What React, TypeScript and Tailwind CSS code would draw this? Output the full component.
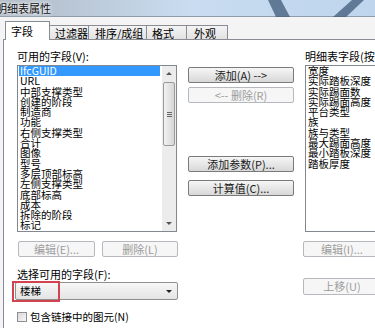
import React from 'react'

const leftItems = [
  'IfcGUID', 'URL', '中部支撑类型', '创建的阶段', '制造商', '功能', '右侧支撑类型', '合计',
  '图像', '型号', '多层顶部标高', '左侧支撑类型', '底部标高', '成本', '拆除的阶段', '标记',
]

const rightItems = [
  '宽度', '实际踏板深度', '实际踢面数', '实际踢面高度', '平台类型', '族', '族与类型',
  '最大踢面高度', '最小踏板深度', '踏板厚度',
]

function Btn({ label, disabled, className = '' }: { label: string; disabled?: boolean; className?: string }) {
  const look = disabled
    ? 'border-[#b5b9bd] bg-[#f6f6f6] text-[#9c9c9c]'
    : 'border-[#7a7a7a] bg-gradient-to-b from-[#f6f6f6] to-[#d8d8d8] text-[#1a1a1a]'
  return (
    <div className={`h-[16px] flex items-center justify-center rounded-[2px] border text-[11px] leading-none whitespace-nowrap ${look} ${className}`}>
      {label}
    </div>
  )
}

function Tab({ label, selected, className = '' }: { label: string; selected?: boolean; className?: string }) {
  if (selected) {
    return (
      <div className={`relative z-10 h-[19px] -mb-px border border-b-0 border-[#898c95] bg-white pl-[5px] pt-[3px] text-[11px] leading-[13px] ${className}`}>
        {label}
      </div>
    )
  }
  return (
    <div className={`h-[14px] -ml-px border border-b-0 border-[#898c95] bg-gradient-to-b from-[#f4f4f4] to-[#e2e2e2] pl-[5px] pt-[1px] text-[11px] leading-[12px] ${className}`}>
      {label}
    </div>
  )
}

export default function App() {
  return (
    <div className="w-[375px] h-[328px] overflow-hidden flex flex-col bg-[#f4f4f4] text-black font-['Noto_Sans_CJK_SC','Noto_Sans',sans-serif]">
      {/* title bar */}
      <div className="relative h-[17px] shrink-0 flex items-center border-b border-[#8e9bab] bg-gradient-to-r from-[#b0bac5] via-[#c9dcf0] to-[#bed5ed]">
        <svg className="absolute inset-0" width="375" height="17" viewBox="0 0 375 17">
          <polygon points="268,0 281,0 290,17 276,17" fill="#3f5a78" opacity="0.75" />
          <polygon points="352,0 364,0 346,17 333,17" fill="#3f5a78" opacity="0.75" />
        </svg>
        <span className="relative -ml-[4px] text-[11px] leading-none text-[#111] [text-shadow:0_0_6px_#fff,0_0_3px_#fff]">明细表属性</span>
      </div>

      <div className="flex-1 flex flex-col pt-[4px]">
        {/* tabs */}
        <div className="flex items-end h-[18px] pl-[5px]">
          <Tab label="字段" selected className="w-[45px]" />
          <Tab label="过滤器" className="w-[40px] pl-[3px]" />
          <Tab label="排序/成组" className="w-[59px] pl-[6px]" />
          <Tab label="格式" className="w-[41px]" />
          <Tab label="外观" className="w-[42px] pl-[7px]" />
        </div>

        {/* panel */}
        <div className="flex-1 ml-[3px] border-t border-l border-[#898c95] bg-white pl-[13px] pt-[8px] flex">
          {/* left column */}
          <div className="w-[161px] shrink-0 flex flex-col">
            <div className="h-[17px] text-[11px] leading-[17px]">可用的字段(V):</div>
            <div className="w-[160px] h-[167px] border border-[#828790] bg-white flex overflow-hidden">
              <div className="flex-1 pt-[0px] pl-[1px] overflow-hidden">
                {leftItems.map((it, i) => (
                  <div
                    key={it}
                    className={`h-[10.3px] text-[10.5px] leading-[10.3px] whitespace-nowrap pl-[1px] ${i === 0 ? 'w-[141px] bg-[#3399ff] text-white' : ''}`}
                  >
                    {it}
                  </div>
                ))}
              </div>
              {/* scrollbar */}
              <div className="w-[14px] shrink-0 bg-[#ececec] flex flex-col items-center">
                <div className="h-[15px] w-full flex items-center justify-center">
                  <div className="w-0 h-0 border-l-[3px] border-r-[3px] border-b-[3px] border-l-transparent border-r-transparent border-b-[#555]" />
                </div>
                <div className="mt-[1px] h-[64px] w-[12px] rounded-[2px] border border-[#9a9a9a] bg-gradient-to-r from-[#f2f2f2] to-[#d6d6d6] flex flex-col items-center justify-center gap-[1px]">
                  <div className="w-[5px] h-px bg-[#666]" />
                  <div className="w-[5px] h-px bg-[#666]" />
                  <div className="w-[5px] h-px bg-[#666]" />
                </div>
                <div className="flex-1" />
                <div className="h-[15px] w-full flex items-center justify-center">
                  <div className="w-0 h-0 border-l-[3px] border-r-[3px] border-t-[3px] border-l-transparent border-r-transparent border-t-[#555]" />
                </div>
              </div>
            </div>
            <div className="mt-[9px] flex gap-[7px] pl-[1px]">
              <Btn label="编辑(E)..." disabled className="w-[77px]" />
              <Btn label="删除(L)" disabled className="w-[76px]" />
            </div>
            <div className="mt-[11px] h-[13px] text-[11px] leading-[13px]">选择可用的字段(F):</div>
            <div className="relative mt-[1px] -ml-[2px] w-[163px] h-[18px] border border-[#8f8f8f] rounded-[2px] bg-gradient-to-b from-[#f7f7f7] to-[#e4e4e4] flex items-center pl-[4px]">
              <span className="text-[10.5px] leading-none">楼梯</span>
              <div className="flex-1" />
              <div className="mr-[5px] w-0 h-0 border-l-[3px] border-r-[3px] border-t-[3px] border-l-transparent border-r-transparent border-t-[#222]" />
              <div className="absolute -left-[4px] -top-[2px] w-[48px] h-[21px] border-2 border-[#d0434f]" />
            </div>
            <div className="mt-[12px] flex items-center gap-[3px]">
              <div className="w-[10px] h-[10px] border border-[#8f8f8f] bg-gradient-to-br from-[#d9d9d9] to-[#f7f7f7]" />
              <span className="text-[10.5px] leading-none">包含链接中的图元(N)</span>
            </div>
          </div>

          {/* middle column */}
          <div className="ml-[10px] w-[106px] shrink-0 flex flex-col pt-[19px]">
            <Btn label="添加(A) -->" />
            <Btn label="<-- 删除(R)" disabled className="mt-[4px]" />
            <Btn label="添加参数(P)..." className="mt-[53px]" />
            <Btn label="计算值(C)..." className="mt-[8px]" />
          </div>

          {/* right column */}
          <div className="ml-[11px] w-[120px] shrink-0 flex flex-col">
            <div className="h-[17px] text-[11px] leading-[17px] whitespace-nowrap">明细表字段(按参数顺序)</div>
            <div className="w-[120px] h-[167px] border border-[#828790] bg-white pl-[2px] overflow-hidden">
              {rightItems.map((it) => (
                <div key={it} className="h-[10.3px] text-[10.5px] leading-[10.3px] whitespace-nowrap">
                  {it}
                </div>
              ))}
            </div>
            <Btn label="编辑(I)..." disabled className="mt-[9px] -ml-[2px] w-[78px]" />
            <Btn label="上移(U)" disabled className="mt-[21px] -ml-[2px] w-[78px] h-[17px]" />
          </div>
        </div>
      </div>
    </div>
  )
}
